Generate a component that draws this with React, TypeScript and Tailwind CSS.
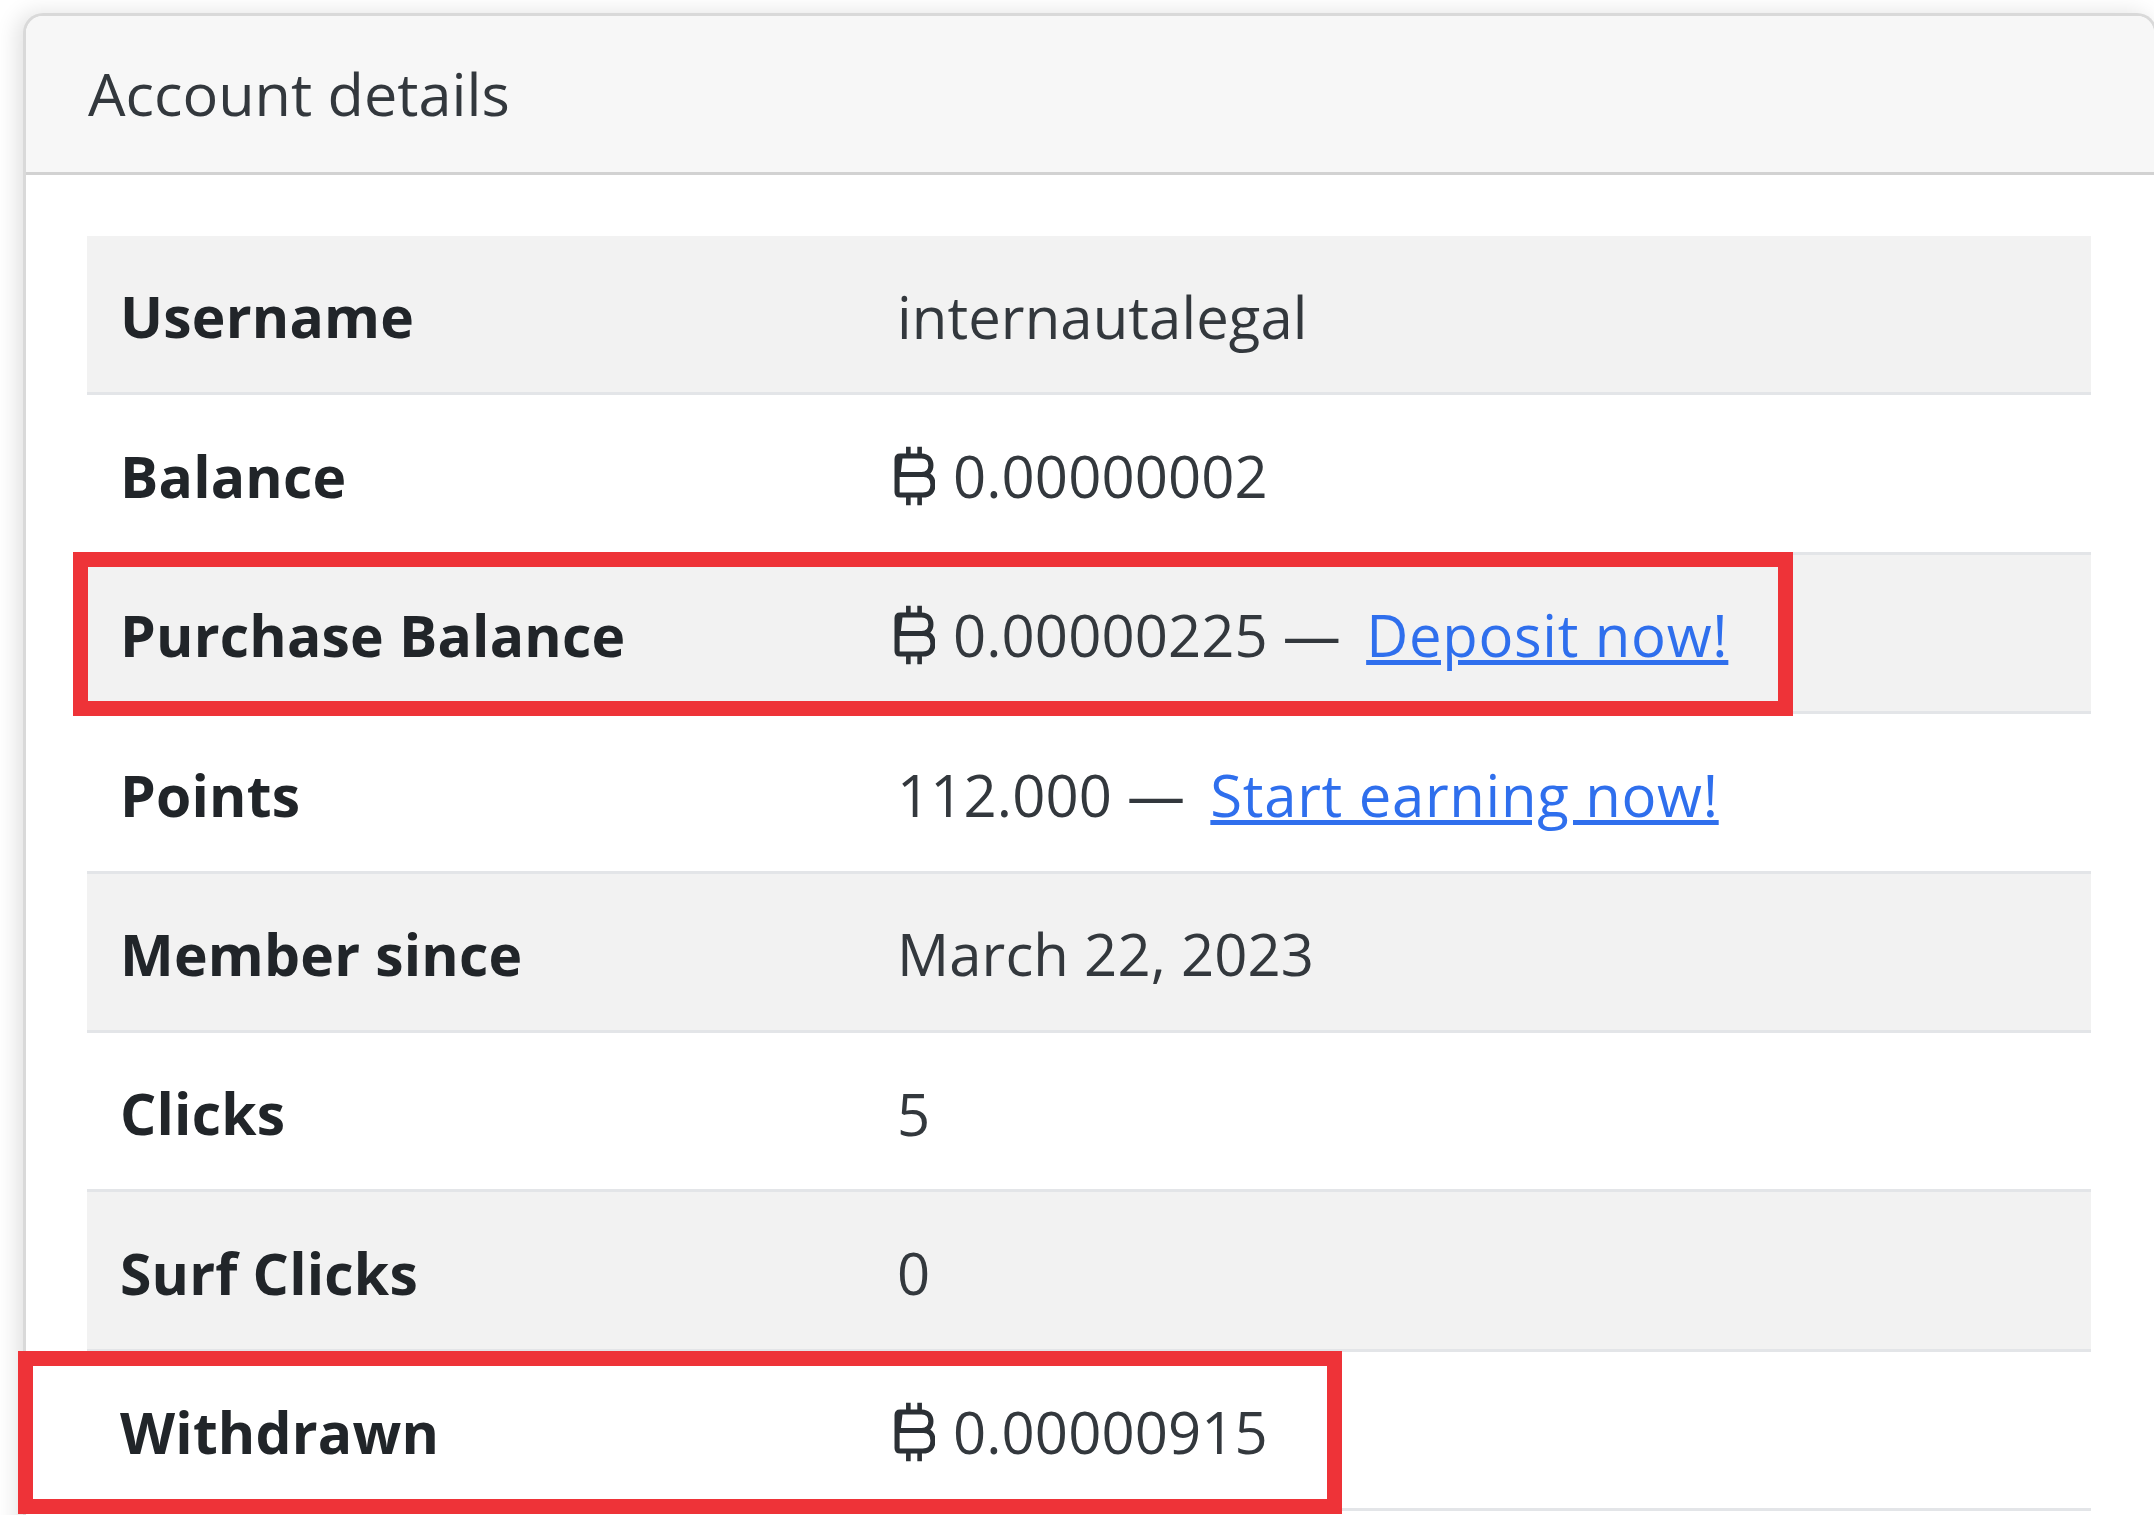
import type { ReactNode } from 'react'

const font = { fontFamily: '"Open Sans", "Noto Sans", sans-serif' }

function BitcoinGlyph() {
  return (
    <svg
      viewBox="0 0 40 61"
      aria-hidden="true"
      className="mr-[18px] -ml-[3px] inline-block h-[64px] w-[41px] align-[-10px]"
      fill="none"
      stroke="#2b3035"
      strokeWidth="5"
    >
      <path d="M6 11h21c6 0 9 4 9 9s-3 9-9 9H4m0 0h25c6 0 9 4 9 10s-3 10-10 10H6c-2 0-3-1-3-3V14c0-2 1-3 3-3z" />
      <path d="M14 2v9M25 2v9M14 50v9M25 50v9" strokeWidth="4.5" />
    </svg>
  )
}

function Row({
  label,
  striped,
  children,
}: {
  label: string
  striped?: boolean
  children: ReactNode
}) {
  return (
    <div
      className={`grid h-[159.4px] grid-cols-[777px_1fr] items-center border-b-[3px] border-[#e3e5e8] px-[33px] pt-[4px] ${
        striped ? 'bg-[#f2f2f2]' : 'bg-white'
      }`}
    >
      <div className="pt-[2px] text-[57px] font-bold tracking-[0.2px] text-[#212529]">{label}</div>
      <div className="whitespace-nowrap text-[58px] tracking-[0.1px] text-[#33383d]">{children}</div>
    </div>
  )
}

function StatLink({ children }: { children: ReactNode }) {
  return <a className="ml-[10px] tracking-[0.7px] text-[#2f6fed] underline">{children}</a>
}

export default function App() {
  return (
    <div className="relative h-[1515px] w-[2154px] overflow-hidden bg-white pt-[13px] pl-[23px]" style={font}>
      <div className="w-[2134px] rounded-t-[20px] border-[3px] border-b-0 border-[#d9d9d9] bg-white pb-[60px] shadow-[-6px_0_22px_rgba(0,0,0,0.12)] blur-[0.7px]">
        <div className="flex h-[159px] items-center rounded-t-[17px] border-b-[3px] border-[#d2d2d2] bg-[#f7f7f7] pl-[62px] text-[59.4px] text-[#33383d]">
          Account details
        </div>
        <div className="mt-[61px] ml-[61px] w-[2004px]">
          <Row label="Username" striped>
            internautalegal
          </Row>
          <Row label="Balance">
            <BitcoinGlyph />
            0.00000002
          </Row>
          <Row label="Purchase Balance" striped>
            <BitcoinGlyph />
            0.00000225 — <StatLink>Deposit now!</StatLink>
          </Row>
          <Row label="Points">
            112.000 — <StatLink>Start earning now!</StatLink>
          </Row>
          <Row label="Member since" striped>
            March 22, 2023
          </Row>
          <Row label="Clicks">5</Row>
          <Row label="Surf Clicks" striped>
            0
          </Row>
          <Row label="Withdrawn">
            <BitcoinGlyph />
            0.00000915
          </Row>
        </div>
      </div>
      <div className="absolute top-[552px] left-[73px] h-[164px] w-[1720px] border-[15px] border-[#ee3338]" />
      <div className="absolute top-[1351px] left-[18px] h-[163px] w-[1324px] border-[15px] border-[#ee3338]" />
    </div>
  )
}
